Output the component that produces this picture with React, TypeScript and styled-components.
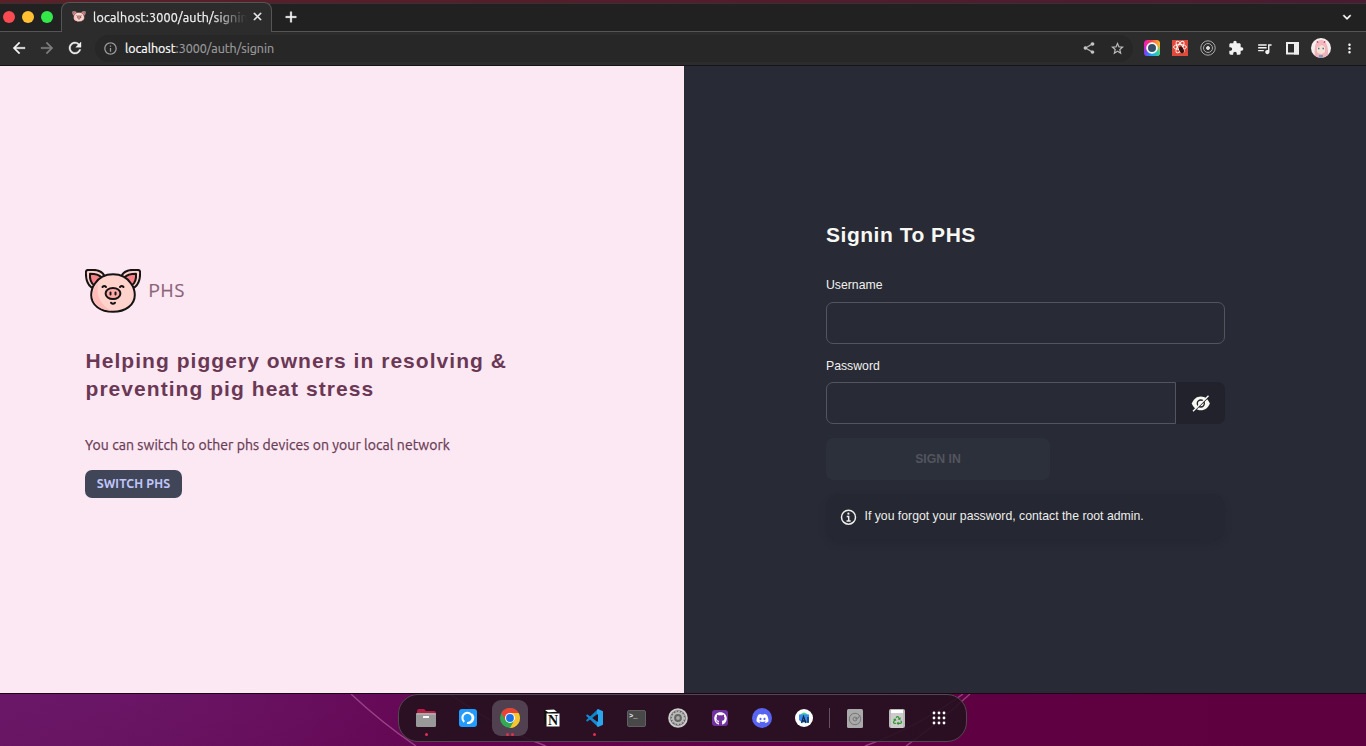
import React from "react";
import styled, { createGlobalStyle, css } from "styled-components";
import { MdArrowBack, MdArrowForward, MdRefresh, MdShare, MdStarOutline, MdExtension, MdQueueMusic, MdMoreVert, MdClose, MdAdd, MdExpandMore, MdInfoOutline } from "react-icons/md";
import { FaDiscord, FaGithub, FaRecycle } from "react-icons/fa";

const Global = createGlobalStyle`
  * { box-sizing: border-box; }
  html, body { margin: 0; padding: 0; }
  body { width: 1366px; height: 746px; overflow: hidden; background: #650445; }
  button, input { font: inherit; margin: 0; outline: none; }
`;

const ui = `"Ubuntu", "Noto Sans", sans-serif`;
const body = `"Liberation Sans", Arial, sans-serif`;

const Screen = styled.div`
  width: 1366px; height: 746px; display: flex; flex-direction: column; overflow: hidden;
  font-family: ${body};
`;
const TopEdge = styled.div`height: 3px; flex: none; background: linear-gradient(90deg, #5b2027, #4c1a31);`;
const TabStrip = styled.div`
  height: 29px; background: #212121; border-top: 1px solid #333; display: flex; position: relative;
  flex: none; font-family: ${ui};
`;
const Lights = styled.div`
  width: 61px; height: 28px; display: flex; gap: 7px; padding: 7px 0 0 3px; border-bottom: 1px solid #555;
`;
const Light = styled.i<{ $c: string }>`width: 12px; height: 12px; border-radius: 50%; background: ${p => p.$c};`;
const Tab = styled.div`
  width: 211px; height: 30px; margin-top: -2px; border: 1px solid #555; border-bottom: 0; border-radius: 8px 8px 0 0;
  background: #2c2c2c; display: flex; align-items: center; padding: 0 0 2px 10px; color: #f1f1f1;
  > svg { flex: none; }
  > svg:last-child path:not([fill]) { stroke: currentColor; stroke-width: 1; }
`;
const TabTitle = styled.div`
  width: 154px; margin: 0 4px 0 7px; overflow: hidden; white-space: nowrap; font-size: 12.5px; letter-spacing: .2px; line-height: 20px;
  -webkit-text-stroke: .25px currentColor;
  mask-image: linear-gradient(90deg, #000 120px, transparent 154px);
`;
const StripRest = styled.div`
  flex: 1; height: 28px; border-bottom: 1px solid #555; display: flex; justify-content: space-between; align-items: center;
  color: #fff; padding: 0 11px 2px 10px;
  path:not([fill]) { stroke: currentColor; stroke-width: .5; }
`;
const Toolbar = styled.div`
  height: 34px; flex: none; background: #2c2c2c; border-bottom: 1px solid #151515; display: flex; align-items: center;
  padding: 0 0 1px 10px; color: #f2f2f2; font-family: ${ui};
`;
const Nav = styled.div`
  display: flex; gap: 10px; width: 85px; flex: none;
  svg { display: block; flex: none; }
  path:not([fill]) { stroke: currentColor; stroke-width: .5; }
`;
const Address = styled.div`
  width: 1038px; height: 27px; flex: none; border-radius: 14px; background: #272727; display: flex; align-items: center; padding: 0 8px;
  color: #9c9c9c; font-size: 12.5px;
`;
const Url = styled.span`
  margin-left: 7px; flex: 1; letter-spacing: -.03px; -webkit-text-stroke: .2px currentColor;
  b { color: #fff; font-weight: 400; }
`;
const AddressActions = styled.div`display: flex; gap: 14px; color: #c4c4c4; path:not([fill]) { stroke: currentColor; stroke-width: .3; }`;
const Extensions = styled.div`display: flex; align-items: center; gap: 12px; margin-left: 10.500px; flex: none; svg { display: block; flex: none; }`;
const AvatarSlot = styled.div`margin: 0 -1px 0 -2px;`;

const Page = styled.main`height: 627px; flex: none; display: flex;`;
const Brand = styled.section`
  width: 684px; background: #fce8f3; padding: 202px 0 0 85px; color: #6c3a56;
`;
const Logo = styled.div`
  display: flex; align-items: center; gap: 7.500px; height: 46px; font: 18.6px ${ui}; letter-spacing: .9px; color: #8b6079;
  svg { display: block; } span { padding-bottom: 2px; -webkit-text-stroke: .2px currentColor; }
`;
const Tagline = styled.h1`margin: 33px 0 0 .5px; font-size: 21px; line-height: 28px; letter-spacing: 1.05px; color: #6a3854;`;
const Hint = styled.p`
  margin: 31px 0 0; font: 14px/22px ${ui}; letter-spacing: .07px; color: #693b54; white-space: nowrap;
  -webkit-text-stroke: .25px currentColor;
`;
const SwitchButton = styled.button`
  margin-top: 14px; display: block; width: 97px; height: 28px; padding: 0; border: 0; border-radius: 7px;
  background: #414558; color: #bfc6f8; font: 700 12.25px/28px ${ui}; letter-spacing: .12px;
`;
const SignIn = styled.section`width: 682px; background: #282a36; padding: 154px 141px 0 142px; color: #f8f8f2;`;
const Heading = styled.h2`margin: 0; font-size: 21px; line-height: 30px; letter-spacing: .52px;`;
const Label = styled.label<{ $top: number }>`display: block; margin-top: ${p => p.$top}px; height: 18px; font-size: 12.25px; line-height: 18px; color: #f0f0eb;`;
const field = css`height: 42px; border: 1px solid #53555e; background: transparent; display: block; color: #f8f8f2; padding: 0 14px;`;
const Input = styled.input`${field} margin-top: 8px; width: 399px; border-radius: 7px;`;
const Group = styled.div`display: flex; margin-top: 7px;`;
const PasswordInput = styled.input`${field} width: 350px; border-radius: 7px 0 0 7px;`;
const Reveal = styled.button`
  width: 49px; height: 42px; border: 0; border-radius: 0 7px 7px 0; background: #21222c; color: #f8f8f2; padding: 0;
  display: grid; place-items: center;
`;
const Submit = styled.button`
  display: block; margin-top: 14px; width: 224px; height: 42px; border: 0; border-radius: 7px; background: #2c303b;
  color: #53555e; font: bold 12.25px ${body};
`;
const Notice = styled.div`
  margin-top: 14px; width: 399px; height: 46px; border-radius: 14px; background: #252732; display: flex; align-items: center;
  padding: 0 14px; gap: 7.5px; font-size: 12.25px; color: #eeeeea; box-shadow: 0 4px 7px -1px #20222c66;
  span { padding-bottom: 2px; }
`;

const Desktop = styled.footer`
  height: 53px; flex: none; display: flex; justify-content: center; position: relative; border-top: 1px solid #1c0718;
  background: radial-gradient(ellipse 500px 120px at 0 0, #6b1768, transparent), linear-gradient(90deg, #65145f, #640450 32%, #5f0042 70%, #5e003f);
`;
const Lines = styled.svg`position: absolute; left: 0; top: 0;`;
const Dock = styled.nav`
  position: relative; width: 569px; height: 48px; border: 1px solid #514951; border-radius: 20px; background: #25101fe8;
  display: flex; align-items: center; padding: 0 6px; margin-right: 1px;
`;
const DockItem = styled.div<{ $active?: boolean }>`
  width: 36px; height: 36px; flex: none; margin: 0 3px; border-radius: 9px; display: grid; place-items: center; position: relative;
  background: ${p => p.$active ? "#514150" : "transparent"}; svg { display: block; }
`;
const Dots = styled.div`
  position: absolute; bottom: 0; left: 0; right: 0; display: flex; justify-content: center; gap: 2px;
  i { width: 3px; height: 3px; border-radius: 50%; background: #e2304f; }
`;
const Divider = styled.i`width: 1px; height: 20px; flex: none; margin: 0 4px; background: #665362;`;

const Ear = () => (
  <>
    <path d="M19.500 7C17.500 2.500 13.500 .9 8 .9H3.200Q.9.9.9 3.200C.7 11 2.500 15.500 6.500 18.500L14 14Z" fill="#ffd2cb" />
    <path d="M16.500 8.500C14 5.600 10 4.800 5 4.800 4.600 9.800 5.500 13.500 9 16L14 14Z" fill="#f98088" />
  </>
);
const Pig = ({ width, height, line = 2 }: { width: number; height: number; line?: number }) => (
  <svg width={width} height={height} viewBox="0 0 56 44" fill="none" stroke="#161314" strokeWidth={line} strokeLinecap="round" strokeLinejoin="round">
    <Ear /><g transform="translate(56 0) scale(-1 1)"><Ear /></g>
    <path d="M28 5.200C19 5.200 13.500 9 10 14.500 7.500 18 6.200 22 6.200 26 6.200 36 15.500 42.800 28 42.800s21.800-6.800 21.800-16.800c0-4-1.300-8-3.800-11.500C42.500 9 37 5.200 28 5.200Z" fill="#ffd2cb" />
    <path d="M13 14C7.500 19.500 5.800 28.500 10 34.500c4 5 10 7 17 7.200-10-4-16.500-13.700-14-27.700Z" fill="#ffbdb9" stroke="none" />
    <ellipse cx="28" cy="24.500" rx="7.400" ry="5.600" fill="#ffaaa8" />
    <path d="M25.500 23.500v2M30.500 23.500v2M17.500 18q1.800-2 3.500 0M35 18q1.800-2 3.500 0M26 33.800q2 2 4 0" />
  </svg>
);
const HiddenEye = () => (
  <svg width="20" height="18" viewBox="0 0 20 18">
    <path d="M.8 9.500C2.300 5.300 5.600 2.500 9.800 2.500s7.500 2.800 9 7c-1.500 4.200-4.800 6.800-9 6.800S2.300 13.700.8 9.500Z" fill="currentColor" />
    <circle cx="9.800" cy="9.500" r="3.500" fill="currentColor" stroke="#21222c" strokeWidth="1.400" />
    <path d="M3 17.400 18 2.600" stroke="#21222c" strokeWidth="1.300" />
    <path d="M2 17.300 17.500 1.700" stroke="currentColor" strokeWidth="1.400" />
  </svg>
);
const Info = () => (
  <svg width="17" height="17" viewBox="0 0 17 17" fill="none" stroke="currentColor" strokeWidth="1.500">
    <circle cx="8.500" cy="8.200" r="7" /><path d="M6.700 7.400h2v4.200M6.500 11.900h4.200" strokeWidth="1.500" /><circle cx="8.400" cy="4.700" r="1.100" fill="currentColor" stroke="none" />
  </svg>
);
const Chrome = () => (
  <svg width="20" height="20" viewBox="0 0 20 20">
    <circle cx="10" cy="10" r="10" fill="#34a853" />
    <path d="M1.340 5A10 10 0 0 1 18.660 5H10L5.670 12.500Z" fill="#ea4335" />
    <path d="M18.660 5A10 10 0 0 1 10 20L14.330 12.500 10 5Z" fill="#fbc52d" />
    <circle cx="10" cy="10" r="5" fill="#fff" /><circle cx="10" cy="10" r="3.900" fill="#1a73e8" />
  </svg>
);
const Files = () => (
  <svg width="20" height="18" viewBox="0 0 20 18">
    <path d="M1 2q0-2 2-2h5l2 2h8q2 0 2 2v5H1Z" fill="#b51e43" /><rect x="0" y="4" width="20" height="14" rx="1.500" fill="#999" />
    <path d="M0 5h20" stroke="#bbb" /><rect x="7" y="7" width="6" height="2" rx=".5" fill="#fff" />
  </svg>
);
const Sync = () => (
  <svg width="18" height="18" viewBox="0 0 18 18"><rect width="18" height="18" rx="3" fill="#229bff" />
    <path d="M5.300 12.900A5.100 5.100 0 1 1 8 14M12.700 5.300A5.100 5.100 0 0 1 10 14" fill="none" stroke="#fff" strokeWidth="2.100" />
  </svg>
);
const NotionText = styled.text`font: bold 14px "Liberation Serif", serif;`;
const Notion = () => (
  <svg width="18" height="19" viewBox="0 0 18 19"><path d="m1 1 11-1 4 4v14H5l-4-4Z" fill="#111" /><path d="m2 1 9-.4L14 2.800 5 3.300Z" fill="#fff" />
    <rect x="3.500" y="4.500" width="13" height="13" fill="#fff" /><NotionText x="5" y="15.800" fill="#111">N</NotionText></svg>
);
const Code = () => (
  <svg width="18" height="18" viewBox="0 0 18 18">
    <path d="M13 0 1 11.200l1.200 1.500L13 4.800Z" fill="#0d83c9" /><path d="M13 18 1 6.800l1.200-1.500L13 13.200Z" fill="#1689d0" />
    <path d="M13 0 18 2.300v13.400L13 18l-1-1V1Z" fill="#2aa6ee" /><path d="M13 5 8 9l5 4Z" fill="#25101f" />
  </svg>
);
const TermText = styled.text`font: bold 7px "Liberation Mono", monospace;`;
const Terminal = () => (
  <svg width="19" height="17" viewBox="0 0 19 17"><rect x=".5" y=".5" width="18" height="16" rx="1.500" fill="#484848" stroke="#606060" /><TermText x="2" y="8" fill="#eee">&gt;_</TermText></svg>
);
const Gear = () => (
  <svg width="20" height="20" viewBox="0 0 20 20" fill="none"><circle cx="10" cy="10" r="9.800" fill="#ccc" /><circle cx="10" cy="10" r="7.800" fill="#666" />
    <circle cx="10" cy="10" r="5" stroke="#bbb" strokeWidth="2.200" /><circle cx="10" cy="10" r="6.500" stroke="#bbb" strokeWidth="1.300" strokeDasharray="1.700 1.300" /><circle cx="10" cy="10" r="1.900" fill="#aaa" /></svg>
);
const GithubTile = styled.div`width: 16px; height: 16px; border-radius: 3px; background: #7132a0; color: white; display: grid; place-items: center;`;
const DiscordTile = styled.div`width: 20px; height: 20px; border-radius: 50%; background: #5865f2; color: white; display: grid; place-items: center;`;
const Studio = () => (
  <svg width="18" height="18" viewBox="0 0 18 18"><circle cx="9" cy="9" r="9" fill="#fff" /><path d="M5 6q4-5 8 0Z" fill="#3ddc84" />
    <path d="M4 5.500h10v8H7L4 11Z" fill="#398bf0" /><path d="m6.500 14 2-6.500 2.500 6.500m-4-2h3.200M13 8v6" stroke="#102b49" strokeWidth="1.300" fill="none" /></svg>
);
const Disk = () => (
  <svg width="16" height="19" viewBox="0 0 16 19"><rect width="16" height="19" rx="1.500" fill="#aaa" /><g fill="none" stroke="#777"><circle cx="8" cy="10" r="5.700" /><circle cx="8" cy="10" r="2" /><path d="M8 10q4 0 5-4" /></g></svg>
);
const TrashTile = styled.div`
  width: 16px; height: 19px; border-radius: 2px; border: solid #bbb; border-width: 1px 2px 0; background: linear-gradient(#fff 3px, #ccc 3px);
  display: grid; place-items: center; padding-top: 4px; color: #2e942c;
`;
const Apps = () => (
  <svg width="14" height="14" viewBox="0 0 14 14" fill="#fff">
    {[2, 7, 12].map(y => [2, 7, 12].map(x => <circle key={`${x}-${y}`} cx={x} cy={y} r="1.400" />))}
  </svg>
);

const Ring = () => (
  <svg width="16" height="16" viewBox="0 0 16 16">
    <defs>
      <linearGradient id="warm"><stop stopColor="#ee18c8" /><stop offset=".45" stopColor="#ff3f4c" /><stop offset="1" stopColor="#ffc22a" /></linearGradient>
      <linearGradient id="cool"><stop stopColor="#7b36f5" /><stop offset=".5" stopColor="#18a9f0" /><stop offset="1" stopColor="#2fdc94" /></linearGradient>
      <linearGradient id="fade" x2="0" y2="1"><stop offset=".3" stopColor="#000" /><stop offset=".8" stopColor="#fff" /></linearGradient>
      <mask id="lower"><rect width="16" height="16" fill="url(#fade)" /></mask>
    </defs>
    <rect width="16" height="16" rx="3.500" fill="url(#warm)" /><rect width="16" height="16" rx="3.500" fill="url(#cool)" mask="url(#lower)" />
    <circle cx="8" cy="8" r="4.900" fill="#36506a" stroke="#fff" strokeWidth="1.800" />
  </svg>
);
const RedAtom = () => (
  <svg width="16" height="16" viewBox="0 0 16 16" fill="none"><rect width="16" height="16" fill="#df4a3a" /><g stroke="#fff" strokeWidth=".9"><ellipse cx="8" cy="7" rx="6.500" ry="2.500" /><ellipse cx="8" cy="7" rx="6.500" ry="2.500" transform="rotate(60 8 7)" /><ellipse cx="8" cy="7" rx="6.500" ry="2.500" transform="rotate(120 8 7)" /></g><ellipse cx="9.500" cy="10" rx="2.200" ry="3.500" transform="rotate(-25 9.500 10)" fill="#311" /></svg>
);
const Target = () => (
  <svg width="16" height="16" viewBox="0 0 16 16" fill="none" stroke="#aaa"><circle cx="8" cy="8" r="7.200" /><circle cx="8" cy="8" r="4.500" /><circle cx="8" cy="8" r="1.500" fill="#ddd" stroke="#ddd" /></svg>
);
const SidePanel = () => (
  <svg width="16" height="16" viewBox="0 0 16 16"><path d="M2 3h11v10.500H2Z" fill="none" stroke="#eee" strokeWidth="2" /><path d="M9 2h5v12.500H9Z" fill="#eee" /></svg>
);
const Avatar = () => (
  <svg width="20" height="20" viewBox="0 0 20 20"><defs><clipPath id="face"><circle cx="10" cy="10" r="10" /></clipPath></defs><g clipPath="url(#face)"><rect width="20" height="20" fill="#f6eeee" />
    <path d="M4 20Q2 2 10 2t7 18Z" fill="#efb4bb" /><path d="M6 9q4-4 8 0v5q-4 4-8 0Z" fill="#fae0d5" /><path d="M5 10l1-6 4-2 4 2 1 6-3-4-3 2Z" fill="#f4b8c0" />
    <path d="M7 10.500h1.500m3 0H13" stroke="#347f80" strokeWidth="1.500" /><path d="m6 3 1 2m7-2-1 2" stroke="#c7384c" /><path d="M8 17h4v3H8Z" fill="#8799bb" /></g></svg>
);

export default function App() {
  return (
    <>
      <Global />
      <Screen>
        <TopEdge />
        <TabStrip>
          <Lights><Light $c="#fa4b52" /><Light $c="#ffc133" /><Light $c="#35e84a" /></Lights>
          <Tab><Pig width={14} height={11} line={1.4} /><TabTitle>localhost:3000/auth/signin</TabTitle><MdClose size={13} /></Tab>
          <StripRest><MdAdd size={18} /><MdExpandMore size={16} /></StripRest>
        </TabStrip>
        <Toolbar>
          <Nav><MdArrowBack size={18} /><MdArrowForward size={18} color="#7d7d7d" /><MdRefresh size={18} /></Nav>
          <Address>
            <MdInfoOutline size={15} /><Url><b>localhost</b>:3000/auth/signin</Url>
            <AddressActions><MdShare size={14} /><MdStarOutline size={15} /></AddressActions>
          </Address>
          <Extensions><Ring /><RedAtom /><Target /><MdExtension size={16} /><MdQueueMusic size={17} /><SidePanel /><AvatarSlot><Avatar /></AvatarSlot><MdMoreVert size={15} /></Extensions>
        </Toolbar>
        <Page>
          <Brand>
            <Logo><Pig width={56} height={44} /><span>PHS</span></Logo>
            <Tagline>Helping piggery owners in resolving &amp;<br />preventing pig heat stress</Tagline>
            <Hint>You can switch to other phs devices on your local network</Hint>
            <SwitchButton>SWITCH PHS</SwitchButton>
          </Brand>
          <SignIn>
            <Heading>Signin To PHS</Heading>
            <Label $top={26}>Username</Label><Input aria-label="Username" />
            <Label $top={13}>Password</Label>
            <Group><PasswordInput type="password" aria-label="Password" /><Reveal aria-label="Show password"><HiddenEye /></Reveal></Group>
            <Submit>SIGN IN</Submit>
            <Notice><Info /><span>If you forgot your password, contact the root admin.</span></Notice>
          </SignIn>
        </Page>
        <Desktop>
          <Lines width="1366" height="52" fill="none" stroke="#b5609f" strokeOpacity=".65" strokeWidth="1.400"><path d="M351 0Q382 29 416 52M450 0Q500 36 546 52M970 0Q936 31 906 52M963 0Q918 33 865 52" /></Lines>
          <Dock>
            <DockItem><Files /><Dots><i /></Dots></DockItem>
            <DockItem><Sync /></DockItem>
            <DockItem $active><Chrome /><Dots><i /><i /></Dots></DockItem>
            <DockItem><Notion /></DockItem>
            <DockItem><Code /><Dots><i /></Dots></DockItem>
            <DockItem><Terminal /></DockItem>
            <DockItem><Gear /></DockItem>
            <DockItem><GithubTile><FaGithub size={13} /></GithubTile></DockItem>
            <DockItem><DiscordTile><FaDiscord size={13} /></DiscordTile></DockItem>
            <DockItem><Studio /></DockItem>
            <Divider />
            <DockItem><Disk /></DockItem>
            <DockItem><TrashTile><FaRecycle size={9} /></TrashTile></DockItem>
            <DockItem><Apps /></DockItem>
          </Dock>
        </Desktop>
      </Screen>
    </>
  );
}
